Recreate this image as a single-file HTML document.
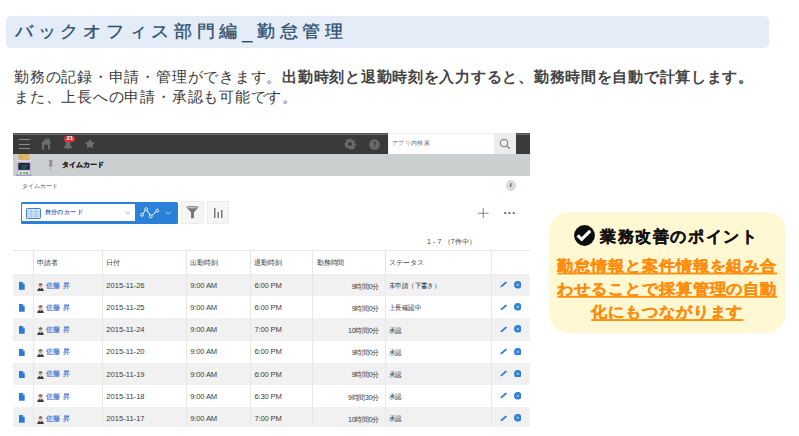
<!DOCTYPE html>
<html lang="ja">
<head>
<meta charset="utf-8">
<style>
*{box-sizing:border-box;margin:0;padding:0}
html,body{width:799px;height:436px;overflow:hidden;background:#fff}
body{position:relative;font-family:"Liberation Sans",sans-serif;color:#333}
.a{position:absolute;white-space:nowrap}
#h{left:6px;top:16px;width:763px;height:32px;background:#e4ecf7;border-radius:5px}
#ht{transform-origin:0 0;transform:scaleY(0.94);left:15px;top:18.6px;font-size:18px;line-height:26px;letter-spacing:4.72px;color:#2d4f6e;-webkit-text-stroke:0.35px #2d4f6e}
#p b{color:#444;letter-spacing:0.72px}
#p{left:14px;top:66.5px;font-size:15px;line-height:20px;letter-spacing:0.78px;color:#3a3a3a}
/* app */
#bar1{left:13px;top:133px;width:517px;height:21px;background:linear-gradient(#545454 0,#545454 1px,#686868 1px,#686868 2px,#3a3a3a 2px)}
#bar2{left:13px;top:154px;width:517px;height:22px;background:#cbcfcf}
#search{left:388px;top:133px;width:106px;height:21px;background:#fff;box-shadow:inset 1px 1px 1px rgba(0,0,0,0.06)}
#sbtn{left:494px;top:133px;width:22px;height:21px;background:#ececec}
#stxt{left:392px;top:138.8px;font-size:6px;line-height:9px;letter-spacing:0.35px;color:#6a6a6a}
.ham{left:18.7px;width:11.3px;height:1.3px;background:#8a8a8a}
#badge{left:64.3px;top:136.4px;width:10.7px;height:5.6px;border-radius:2.8px;background:#d8302b;color:#fff;font-size:6px;line-height:5.8px;font-weight:bold;text-align:center;letter-spacing:-0.1px}
#tc{left:61.5px;top:159.8px;font-size:7px;line-height:9px;font-weight:bold;letter-spacing:0.1px;color:#222;-webkit-text-stroke:0.15px #222}
#crumb{left:21.5px;top:182.2px;font-size:6px;line-height:8px;letter-spacing:0.05px;color:#555}
#info{left:505.5px;top:180px;width:10.5px;height:10.5px;border-radius:50%;background:#d9dcdc;color:#444;font-size:7px;line-height:10.5px;text-align:center;font-style:italic;font-weight:bold;font-family:"Liberation Serif",serif}
#dd{left:20.5px;top:201.5px;width:157px;height:22px;background:#2b80d7;border-radius:1.5px}
#ddw{left:22.3px;top:203.6px;width:112.5px;height:17.8px;background:#fff}
#ddt{left:44.6px;top:208.2px;font-size:6px;line-height:9px;letter-spacing:0.45px;font-weight:bold;color:#4a67b8}
.btn{top:201.3px;width:22.5px;height:22.3px;background:#f5f5f5;border:1px solid #ebebeb;border-radius:1px}
#cnt{left:427px;top:236.5px;font-size:7px;line-height:9px;letter-spacing:0.1px;color:#444}
#plus{left:478px;top:207.5px;width:10.5px;height:10.5px}
.tb{left:13px;top:250px;width:517px;height:1px;background:#e6e8e8}
.vl{top:250px;width:1px;height:177px;background:#e6e8e8}
.hd{top:259px;font-size:7px;line-height:8px;letter-spacing:-0.2px;color:#3a3a3a}
.r{position:absolute;left:13px;width:517px;height:22.2px;font-size:8.5px;white-space:nowrap}
.r.g{background:#f1f1f1}
.r>*{position:absolute}
.r svg{display:block}
.doc{left:6px;top:8px;width:5.7px;height:7.7px}
.per{left:24px;top:8.7px;width:7px;height:8px}
.nm{left:33px;top:7.6px;font-size:7px;line-height:8px;letter-spacing:-0.15px;word-spacing:1.2px;color:#3b6fd2;-webkit-text-stroke:0.15px #3b6fd2}
.dt{left:93.3px;top:6.8px;font-size:7.6px;line-height:10px;letter-spacing:0px;color:#3a3a3a}
.ci{left:177.2px;top:6.8px;font-size:7.6px;line-height:10px;letter-spacing:-0.15px;color:#3a3a3a}
.co{left:241.4px;top:6.8px;font-size:7.6px;line-height:10px;letter-spacing:-0.15px;color:#3a3a3a}
.wk{right:151px;top:7.5px;font-size:7px;line-height:9px;letter-spacing:-0.3px;color:#3a3a3a}
.st{left:375.5px;top:7.2px;font-size:13px;line-height:18px;letter-spacing:0.9px;color:#2a2a2a;transform-origin:0 0;transform:scale(0.46,0.5)}
.pen{left:486.5px;top:7.4px;width:7.4px;height:6.6px}
.xc{left:500.8px;top:7px;width:7.6px;height:7.6px}
#box{left:549px;top:212px;width:236.6px;height:120.6px;background:#fff8d3;border-radius:20px}
#chk{left:574px;top:224.8px;width:21px;height:21px}
#bt{transform-origin:0 12px;transform:scale(0.965);left:599.5px;top:225px;font-size:17px;line-height:24px;font-weight:bold;letter-spacing:1.25px;color:#111;-webkit-text-stroke:0.3px #111}
#ot{transform-origin:0 0;transform:scaleY(0.93);left:549px;top:253.5px;width:236.6px;text-align:center;font-size:16px;line-height:25.1px;font-weight:bold;letter-spacing:0.9px;color:#ff8c0a;-webkit-text-stroke:0.3px #ff8c0a;white-space:normal}
#ot span{text-decoration:underline;text-decoration-thickness:2px;text-underline-offset:2.4px}

</style>
</head>
<body>
<div id="h" class="a"></div>
<div id="ht" class="a">バックオフィス部門編<span style="position:relative;top:1.8px">_</span>勤怠管理</div>
<div id="p" class="a">勤務の記録・申請・管理ができます。<b>出勤時刻と退勤時刻を入力すると、勤務時間を自動で計算します。</b><br>また、上長への申請・承認も可能です。</div>

<div id="bar1" class="a"></div>
<div id="bar2" class="a"></div>
<div class="a ham" style="top:139.2px"></div>
<div class="a ham" style="top:143.7px"></div>
<div class="a ham" style="top:148.2px"></div>
<svg class="a" style="left:41px;top:138px" width="10.4" height="12" viewBox="0 0 10.4 12"><path d="M5.2 0L7 1.6V0.8H9V3.4L10.4 5.8H9V11.8H7V6.8H3V11.8H1V5.8H0Z" fill="#6c6c6c"/></svg>
<svg class="a" style="left:63px;top:140px" width="10" height="10" viewBox="0 0 10 10"><path d="M5 0.5C2.8 0.5 2.4 2.2 2.4 4.5V6L0.2 7.9V8.2H9.8V7.9L7.6 6V4.5C7.6 2.2 7.2 0.5 5 0.5Z M4.3 8.6H5.7V9.6H4.3Z" fill="#6c6c6c"/></svg>
<div id="badge" class="a">21</div>
<svg class="a" style="left:84.2px;top:138.3px" width="11.8" height="11.8" viewBox="0 0 24 24"><path d="M12 1.5L15.1 8.3L22.5 9.1L17 14.1L18.5 21.4L12 17.7L5.5 21.4L7 14.1L1.5 9.1L8.9 8.3Z" fill="#6f6f6f"/></svg>
<svg class="a" style="left:344px;top:137.6px" width="12" height="12" viewBox="0 0 24 24"><path fill="#6a6a6a" fill-rule="evenodd" d="M10 1h4l.6 3.1 2 .9 2.6-1.8 2.8 2.8-1.8 2.6.9 2 3.1.6v4l-3.1.6-.9 2 1.8 2.6-2.8 2.8-2.6-1.8-2 .9L14 23h-4l-.6-3.1-2-.9-2.6 1.8-2.8-2.8 1.8-2.6-.9-2L1 14v-4l3.1-.6.9-2L3.2 4.8 6 2l2.6 1.8 2-.9zM12 8a4 4 0 100 8 4 4 0 000-8z"/></svg>
<svg class="a" style="left:369px;top:138.8px" width="11" height="11" viewBox="0 0 22 22"><circle cx="11" cy="11" r="10.5" fill="#6a6a6a"/><path d="M7.6 8.2C7.6 6.2 9.1 5 11 5S14.4 6.2 14.4 8C14.4 10.2 12 10.3 12 12.6H10C10 9.6 12.3 9.5 12.3 8.1 12.3 7.4 11.8 6.9 11 6.9S9.7 7.5 9.7 8.2Z M10 14.2H12V16.4H10Z" fill="#3b3b3b"/></svg>
<div id="search" class="a"></div>
<div id="stxt" class="a">アプリ内検索</div>
<div id="sbtn" class="a"></div>
<svg class="a" style="left:499px;top:138px" width="12" height="12" viewBox="0 0 12 12"><circle cx="5" cy="5" r="3.7" fill="none" stroke="#8a8a8a" stroke-width="1.2"/><path d="M7.7 7.7L10.8 10.8" stroke="#8a8a8a" stroke-width="1.5"/></svg>

<svg class="a" style="left:16px;top:154px" width="16" height="22" viewBox="0 0 16 22">
<rect x="2.6" y="0" width="10.6" height="7" fill="#d9ae5e"/>
<path d="M3.5 1.8H12.5M3.5 3.4H12.5M3.5 5H12.5" stroke="#e9c98a" stroke-width="0.6"/>
<path d="M4 2.6H7M4 4.2H6" stroke="#e0873a" stroke-width="0.5"/>
<rect x="0.3" y="6" width="15.2" height="15.6" rx="0.8" fill="#c3bddb"/>
<rect x="0.3" y="6" width="15.2" height="1.6" fill="#dcd8ec"/>
<rect x="0.3" y="20.3" width="15.2" height="1.3" fill="#8f88b8"/>
<rect x="2.3" y="8.9" width="11.5" height="6.9" fill="#1d2438"/>
<path d="M3.5 10.5H4.5M6 11.3H12M5 13H11M6 14.2H10" stroke="#2f7f86" stroke-width="0.7"/>
<rect x="2.3" y="17.3" width="11.5" height="3.2" fill="#ecebf3"/>
<rect x="3.7" y="18" width="2.2" height="2" fill="#5db466"/><rect x="7.2" y="18" width="2.1" height="2" fill="#5db466"/><rect x="10" y="18" width="2.3" height="2" fill="#5db466"/>
</svg>
<svg class="a" style="left:47.5px;top:159.5px" width="5.5" height="11" viewBox="0 0 5.5 11"><path d="M0.8 0.3H4.7V1.3H4V4.3L5.2 6.2H3V10.8H2.5V6.2H0.3L1.5 4.3V1.3H0.8Z" fill="#8a8c8c"/></svg>
<div id="tc" class="a">タイムカード</div>

<div id="crumb" class="a">タイムカード</div>
<div id="info" class="a">i</div>

<div id="dd" class="a"></div>
<div id="ddw" class="a"></div>
<svg class="a" style="left:25.8px;top:207.8px" width="15" height="11" viewBox="0 0 15 11"><rect x="0.5" y="0.5" width="14" height="10" rx="0.8" fill="#dbe8f8" stroke="#3a7fd2"/><path d="M0.5 3.5H14.5M0.5 5.8H14.5M0.5 8.1H14.5M5.2 0.5V10.5M9.8 0.5V10.5" stroke="#7aa9e2" stroke-width="0.5"/></svg>
<div id="ddt" class="a">自分のカード</div>
<svg class="a" style="left:124.8px;top:211px" width="5.5" height="4" viewBox="0 0 5.5 4"><path d="M0.4 0.6L2.75 3L5.1 0.6" fill="none" stroke="#6e9bd8" stroke-width="0.8"/></svg>
<svg class="a" style="left:139.5px;top:207.3px" width="19.5" height="11.5" viewBox="0 0 19.5 11.5"><path d="M2 7.8L6.2 2.2L10.8 9.3L17.3 3.6" fill="none" stroke="#fff" stroke-width="1"/><circle cx="2" cy="7.8" r="1.45" fill="#2b80d7" stroke="#fff" stroke-width="0.9"/><circle cx="6.2" cy="2.2" r="1.45" fill="#2b80d7" stroke="#fff" stroke-width="0.9"/><circle cx="10.8" cy="9.3" r="1.45" fill="#2b80d7" stroke="#fff" stroke-width="0.9"/><circle cx="17.3" cy="3.6" r="1.45" fill="#2b80d7" stroke="#fff" stroke-width="0.9"/></svg>
<svg class="a" style="left:165px;top:211px" width="6.5" height="4" viewBox="0 0 6.5 4"><path d="M0.4 0.6L3.25 3L6.1 0.6" fill="none" stroke="#cfe2f7" stroke-width="0.8"/></svg>
<div class="a btn" style="left:181px"></div>
<svg class="a" style="left:185.6px;top:206.3px" width="13" height="12.5" viewBox="0 0 13 12.5"><path d="M0.3 1.2C0.3 0.4 3 0 6.5 0S12.7 0.4 12.7 1.2L8 6.3V12.3H5V6.3Z" fill="#777"/><ellipse cx="6.5" cy="1.5" rx="5" ry="1" fill="#bdbdbd"/></svg>
<div class="a btn" style="left:206.8px"></div>
<svg class="a" style="left:214px;top:208px" width="9" height="10" viewBox="0 0 9 10"><rect x="0" y="0" width="1.5" height="10" fill="#7a7a7a"/><rect x="3.5" y="4" width="1.5" height="6" fill="#7a7a7a"/><rect x="7" y="2" width="1.5" height="8" fill="#7a7a7a"/></svg>
<svg class="a" style="left:478px;top:207.5px" width="10.5" height="10.5" viewBox="0 0 10.5 10.5"><path d="M5.25 0V10.5M0 5.25H10.5" stroke="#777" stroke-width="0.9"/></svg>
<svg class="a" style="left:503.5px;top:211.8px" width="11" height="2.4" viewBox="0 0 11 2.4"><circle cx="1.2" cy="1.2" r="1.1" fill="#666"/><circle cx="5.5" cy="1.2" r="1.1" fill="#666"/><circle cx="9.8" cy="1.2" r="1.1" fill="#666"/></svg>
<div id="cnt" class="a">1 - 7 （7件中）</div>

<div class="r g" style="top:274.00px">
<svg class="doc" viewBox="0 0 6 8"><path d="M0 0H3.8L6 2.2V8H0Z" fill="#2b7bd6"/><path d="M3.8 0V2.2H6" fill="#8fbbee"/></svg>
<svg class="per" viewBox="0 0 7 8"><rect width="7" height="8" fill="#ececec"/><ellipse cx="3.5" cy="2.6" rx="1.6" ry="1.9" fill="#c7a489"/><path d="M1.8 2.4C1.7 0.9 2.5 0.4 3.5 0.4S5.4 0.9 5.3 2.4C5 1.6 4.4 1.3 3.5 1.4S2.1 1.6 1.8 2.4Z" fill="#2a2522"/><path d="M0.2 8C0.4 5.8 1.5 5.2 3.5 5S6.6 5.8 6.8 8Z" fill="#3a3a40"/><path d="M3 5L3.5 6.6L4 5Z" fill="#f4f4f4"/></svg>
<span class="nm">佐藤 昇</span>
<span class="dt">2015-11-26</span><span class="ci">9:00 AM</span><span class="co">6:00 PM</span>
<span class="wk">9時間0分</span><span class="st">未申請（下書き）</span>
<svg class="pen" viewBox="0 0 8 7"><path d="M0.1 6.9L0.9 5.1L6.1 0.5L7.7 1.7L2.6 6.1Z" fill="#2e7fd8"/></svg>
<svg class="xc" viewBox="0 0 8 8"><circle cx="4" cy="4" r="4" fill="#2e7fd8"/><path d="M2.8 2.8L5.2 5.2M5.2 2.8L2.8 5.2" stroke="#dfeaf8" stroke-width="0.8"/></svg>
</div>
<div class="r" style="top:296.20px">
<svg class="doc" viewBox="0 0 6 8"><path d="M0 0H3.8L6 2.2V8H0Z" fill="#2b7bd6"/><path d="M3.8 0V2.2H6" fill="#8fbbee"/></svg>
<svg class="per" viewBox="0 0 7 8"><rect width="7" height="8" fill="#ececec"/><ellipse cx="3.5" cy="2.6" rx="1.6" ry="1.9" fill="#c7a489"/><path d="M1.8 2.4C1.7 0.9 2.5 0.4 3.5 0.4S5.4 0.9 5.3 2.4C5 1.6 4.4 1.3 3.5 1.4S2.1 1.6 1.8 2.4Z" fill="#2a2522"/><path d="M0.2 8C0.4 5.8 1.5 5.2 3.5 5S6.6 5.8 6.8 8Z" fill="#3a3a40"/><path d="M3 5L3.5 6.6L4 5Z" fill="#f4f4f4"/></svg>
<span class="nm">佐藤 昇</span>
<span class="dt">2015-11-25</span><span class="ci">9:00 AM</span><span class="co">6:00 PM</span>
<span class="wk">9時間0分</span><span class="st">上長確認中</span>
<svg class="pen" viewBox="0 0 8 7"><path d="M0.1 6.9L0.9 5.1L6.1 0.5L7.7 1.7L2.6 6.1Z" fill="#2e7fd8"/></svg>
<svg class="xc" viewBox="0 0 8 8"><circle cx="4" cy="4" r="4" fill="#2e7fd8"/><path d="M2.8 2.8L5.2 5.2M5.2 2.8L2.8 5.2" stroke="#dfeaf8" stroke-width="0.8"/></svg>
</div>
<div class="r g" style="top:318.40px">
<svg class="doc" viewBox="0 0 6 8"><path d="M0 0H3.8L6 2.2V8H0Z" fill="#2b7bd6"/><path d="M3.8 0V2.2H6" fill="#8fbbee"/></svg>
<svg class="per" viewBox="0 0 7 8"><rect width="7" height="8" fill="#ececec"/><ellipse cx="3.5" cy="2.6" rx="1.6" ry="1.9" fill="#c7a489"/><path d="M1.8 2.4C1.7 0.9 2.5 0.4 3.5 0.4S5.4 0.9 5.3 2.4C5 1.6 4.4 1.3 3.5 1.4S2.1 1.6 1.8 2.4Z" fill="#2a2522"/><path d="M0.2 8C0.4 5.8 1.5 5.2 3.5 5S6.6 5.8 6.8 8Z" fill="#3a3a40"/><path d="M3 5L3.5 6.6L4 5Z" fill="#f4f4f4"/></svg>
<span class="nm">佐藤 昇</span>
<span class="dt">2015-11-24</span><span class="ci">9:00 AM</span><span class="co">7:00 PM</span>
<span class="wk">10時間0分</span><span class="st">承認</span>
<svg class="pen" viewBox="0 0 8 7"><path d="M0.1 6.9L0.9 5.1L6.1 0.5L7.7 1.7L2.6 6.1Z" fill="#2e7fd8"/></svg>
<svg class="xc" viewBox="0 0 8 8"><circle cx="4" cy="4" r="4" fill="#2e7fd8"/><path d="M2.8 2.8L5.2 5.2M5.2 2.8L2.8 5.2" stroke="#dfeaf8" stroke-width="0.8"/></svg>
</div>
<div class="r" style="top:340.60px">
<svg class="doc" viewBox="0 0 6 8"><path d="M0 0H3.8L6 2.2V8H0Z" fill="#2b7bd6"/><path d="M3.8 0V2.2H6" fill="#8fbbee"/></svg>
<svg class="per" viewBox="0 0 7 8"><rect width="7" height="8" fill="#ececec"/><ellipse cx="3.5" cy="2.6" rx="1.6" ry="1.9" fill="#c7a489"/><path d="M1.8 2.4C1.7 0.9 2.5 0.4 3.5 0.4S5.4 0.9 5.3 2.4C5 1.6 4.4 1.3 3.5 1.4S2.1 1.6 1.8 2.4Z" fill="#2a2522"/><path d="M0.2 8C0.4 5.8 1.5 5.2 3.5 5S6.6 5.8 6.8 8Z" fill="#3a3a40"/><path d="M3 5L3.5 6.6L4 5Z" fill="#f4f4f4"/></svg>
<span class="nm">佐藤 昇</span>
<span class="dt">2015-11-20</span><span class="ci">9:00 AM</span><span class="co">6:00 PM</span>
<span class="wk">9時間0分</span><span class="st">承認</span>
<svg class="pen" viewBox="0 0 8 7"><path d="M0.1 6.9L0.9 5.1L6.1 0.5L7.7 1.7L2.6 6.1Z" fill="#2e7fd8"/></svg>
<svg class="xc" viewBox="0 0 8 8"><circle cx="4" cy="4" r="4" fill="#2e7fd8"/><path d="M2.8 2.8L5.2 5.2M5.2 2.8L2.8 5.2" stroke="#dfeaf8" stroke-width="0.8"/></svg>
</div>
<div class="r g" style="top:362.80px">
<svg class="doc" viewBox="0 0 6 8"><path d="M0 0H3.8L6 2.2V8H0Z" fill="#2b7bd6"/><path d="M3.8 0V2.2H6" fill="#8fbbee"/></svg>
<svg class="per" viewBox="0 0 7 8"><rect width="7" height="8" fill="#ececec"/><ellipse cx="3.5" cy="2.6" rx="1.6" ry="1.9" fill="#c7a489"/><path d="M1.8 2.4C1.7 0.9 2.5 0.4 3.5 0.4S5.4 0.9 5.3 2.4C5 1.6 4.4 1.3 3.5 1.4S2.1 1.6 1.8 2.4Z" fill="#2a2522"/><path d="M0.2 8C0.4 5.8 1.5 5.2 3.5 5S6.6 5.8 6.8 8Z" fill="#3a3a40"/><path d="M3 5L3.5 6.6L4 5Z" fill="#f4f4f4"/></svg>
<span class="nm">佐藤 昇</span>
<span class="dt">2015-11-19</span><span class="ci">9:00 AM</span><span class="co">6:00 PM</span>
<span class="wk">9時間0分</span><span class="st">承認</span>
<svg class="pen" viewBox="0 0 8 7"><path d="M0.1 6.9L0.9 5.1L6.1 0.5L7.7 1.7L2.6 6.1Z" fill="#2e7fd8"/></svg>
<svg class="xc" viewBox="0 0 8 8"><circle cx="4" cy="4" r="4" fill="#2e7fd8"/><path d="M2.8 2.8L5.2 5.2M5.2 2.8L2.8 5.2" stroke="#dfeaf8" stroke-width="0.8"/></svg>
</div>
<div class="r" style="top:385.00px">
<svg class="doc" viewBox="0 0 6 8"><path d="M0 0H3.8L6 2.2V8H0Z" fill="#2b7bd6"/><path d="M3.8 0V2.2H6" fill="#8fbbee"/></svg>
<svg class="per" viewBox="0 0 7 8"><rect width="7" height="8" fill="#ececec"/><ellipse cx="3.5" cy="2.6" rx="1.6" ry="1.9" fill="#c7a489"/><path d="M1.8 2.4C1.7 0.9 2.5 0.4 3.5 0.4S5.4 0.9 5.3 2.4C5 1.6 4.4 1.3 3.5 1.4S2.1 1.6 1.8 2.4Z" fill="#2a2522"/><path d="M0.2 8C0.4 5.8 1.5 5.2 3.5 5S6.6 5.8 6.8 8Z" fill="#3a3a40"/><path d="M3 5L3.5 6.6L4 5Z" fill="#f4f4f4"/></svg>
<span class="nm">佐藤 昇</span>
<span class="dt">2015-11-18</span><span class="ci">9:00 AM</span><span class="co">6:30 PM</span>
<span class="wk">9時間30分</span><span class="st">承認</span>
<svg class="pen" viewBox="0 0 8 7"><path d="M0.1 6.9L0.9 5.1L6.1 0.5L7.7 1.7L2.6 6.1Z" fill="#2e7fd8"/></svg>
<svg class="xc" viewBox="0 0 8 8"><circle cx="4" cy="4" r="4" fill="#2e7fd8"/><path d="M2.8 2.8L5.2 5.2M5.2 2.8L2.8 5.2" stroke="#dfeaf8" stroke-width="0.8"/></svg>
</div>
<div class="r g" style="top:407.20px;height:19.8px">
<svg class="doc" viewBox="0 0 6 8"><path d="M0 0H3.8L6 2.2V8H0Z" fill="#2b7bd6"/><path d="M3.8 0V2.2H6" fill="#8fbbee"/></svg>
<svg class="per" viewBox="0 0 7 8"><rect width="7" height="8" fill="#ececec"/><ellipse cx="3.5" cy="2.6" rx="1.6" ry="1.9" fill="#c7a489"/><path d="M1.8 2.4C1.7 0.9 2.5 0.4 3.5 0.4S5.4 0.9 5.3 2.4C5 1.6 4.4 1.3 3.5 1.4S2.1 1.6 1.8 2.4Z" fill="#2a2522"/><path d="M0.2 8C0.4 5.8 1.5 5.2 3.5 5S6.6 5.8 6.8 8Z" fill="#3a3a40"/><path d="M3 5L3.5 6.6L4 5Z" fill="#f4f4f4"/></svg>
<span class="nm">佐藤 昇</span>
<span class="dt">2015-11-17</span><span class="ci">9:00 AM</span><span class="co">7:00 PM</span>
<span class="wk">10時間0分</span><span class="st">承認</span>
<svg class="pen" viewBox="0 0 8 7"><path d="M0.1 6.9L0.9 5.1L6.1 0.5L7.7 1.7L2.6 6.1Z" fill="#2e7fd8"/></svg>
<svg class="xc" viewBox="0 0 8 8"><circle cx="4" cy="4" r="4" fill="#2e7fd8"/><path d="M2.8 2.8L5.2 5.2M5.2 2.8L2.8 5.2" stroke="#dfeaf8" stroke-width="0.8"/></svg>
</div>
<div class="a tb"></div>
<div class="a vl" style="left:33px"></div>
<div class="a vl" style="left:102px"></div>
<div class="a vl" style="left:186px"></div>
<div class="a vl" style="left:250px"></div>
<div class="a vl" style="left:312px"></div>
<div class="a vl" style="left:385px"></div>
<div class="a vl" style="left:491px"></div>
<div class="a hd" style="left:37.3px">申請者</div>
<div class="a hd" style="left:106.3px">日付</div>
<div class="a hd" style="left:190.2px">出勤時刻</div>
<div class="a hd" style="left:254.4px">退勤時刻</div>
<div class="a hd" style="left:317px">勤務時間</div>
<div class="a hd" style="left:389.4px">ステータス</div>

<div id="box" class="a"></div>
<svg id="chk" class="a" viewBox="0 0 21 21"><circle cx="10.5" cy="10.5" r="10.4" fill="#0c0c0c"/><path d="M3.6 10.4L7.7 14.4L16.2 5.9" fill="none" stroke="#fff" stroke-width="3.1" stroke-linejoin="miter"/></svg>
<div id="bt" class="a">業務改善のポイント</div>
<div id="ot" class="a"><span>勤怠情報と案件情報を組み合</span><br><span>わせることで採算管理の自動</span><br><span>化にもつながります</span></div>

</body>
</html>
